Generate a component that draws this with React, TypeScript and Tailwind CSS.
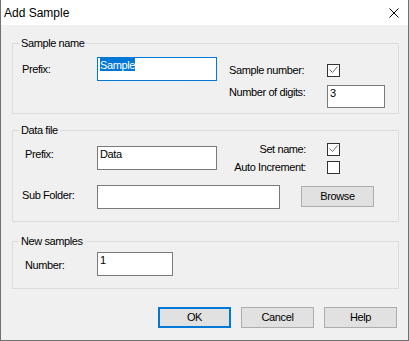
import type { ReactNode } from 'react';

const Checkbox = ({ checked }: { checked?: boolean }) => (
  <div className="w-[13px] h-[13px] shrink-0 border border-[#333333] bg-white">
    {checked && (
      <svg width="11" height="11" viewBox="0 0 11 11">
        <path d="M1.5 4.5 L4.5 7.5 L9.5 1.5" stroke="#6e6e6e" strokeWidth="1" fill="none" />
      </svg>
    )}
  </div>
);

const TextBox = ({ className, focused, children }: { className: string; focused?: boolean; children?: ReactNode }) => (
  <div
    className={`${className} shrink-0 bg-white border ${focused ? 'border-[#0078d7]' : 'border-[#7a7a7a]'} px-[2px] pt-[1px] leading-[13px]`}
  >
    {children}
  </div>
);

const Group = ({ title, className, children }: { title: string; className: string; children: ReactNode }) => (
  <div className={`w-[387px] border border-[#dcdcdc] ${className}`}>
    <div className="-mt-[7px] ml-[6px] px-[2px] w-fit h-[13px] leading-[13px] bg-[#f0f0f0]">{title}</div>
    {children}
  </div>
);

const Button = ({ label, primary }: { label: string; primary?: boolean }) => (
  <button
    className={`w-[73px] h-[21px] bg-[#e1e1e1] flex items-center justify-center leading-[13px] ${
      primary ? 'border-2 border-[#0078d7]' : 'border border-[#adadad]'
    }`}
  >
    {label}
  </button>
);

export default function App() {
  return (
    <div className="w-[409px] h-[341px] bg-[#f0f0f0] border-x border-b border-[#707070] flex flex-col text-black text-[11px] leading-[13px] tracking-[-0.4px] font-['Liberation_Sans',Arial,sans-serif]">
      {/* title bar */}
      <div className="h-[25px] shrink-0 bg-white flex items-center justify-between pl-[3px] pr-[9px]">
        <span className="text-[12px] tracking-normal mt-[1px]">Add Sample</span>
        <svg width="10" height="10" viewBox="0 0 10 10">
          <path d="M0.5 0.5 L9.5 9.5 M9.5 0.5 L0.5 9.5" stroke="#000" strokeWidth="1" />
        </svg>
      </div>

      <div className="pl-[11px] flex flex-col">
        <Group title="Sample name" className="mt-[18px] h-[71px]">
          <div className="flex items-start mt-[7px]">
            <div className="flex h-[24px]">
              <span className="ml-[9px] w-[75px] mt-[6px]">Prefix:</span>
              <TextBox className="w-[120px] h-[24px]" focused>
                <span className="bg-[#0078d7] text-white pt-[1px]">Sample</span>
              </TextBox>
            </div>
            <div className="ml-[12px] flex flex-col">
              <div className="mt-[7px] h-[13px] flex items-center">
                <span className="w-[98px] -mt-[1px]">Sample number:</span>
                <Checkbox checked />
              </div>
              <div className="mt-[8px] flex">
                <span className="w-[98px] mt-[1px]">Number of digits:</span>
                <TextBox className="w-[58px] h-[23px]">3</TextBox>
              </div>
            </div>
          </div>
        </Group>

        <Group title="Data file" className="mt-[16px] h-[92px]">
          <div className="flex items-start mt-[6px]">
            <div className="mt-[3px] flex h-[24px]">
              <span className="ml-[12px] w-[72px] mt-[2px]">Prefix:</span>
              <TextBox className="w-[120px] h-[24px]">Data</TextBox>
            </div>
            <div className="ml-[12px] flex flex-col">
              <div className="h-[13px] flex items-center">
                <span className="w-[77px] text-right">Set name:</span>
                <div className="ml-[21px]"><Checkbox checked /></div>
              </div>
              <div className="mt-[5px] h-[13px] flex items-center">
                <span className="w-[77px] text-right">Auto Increment:</span>
                <div className="ml-[21px]"><Checkbox /></div>
              </div>
            </div>
          </div>
          <div className="mt-[11px] flex items-start h-[24px]">
            <span className="ml-[9px] w-[75px] mt-[4px]">Sub Folder:</span>
            <TextBox className="w-[183px] h-[24px]" />
            <div className="ml-[21px] mt-[1px]"><Button label="Browse" /></div>
          </div>
        </Group>

        <Group title="New samples" className="mt-[19px] h-[48px]">
          <div className="mt-[4px] flex items-start">
            <span className="ml-[12px] w-[72px] mt-[7px]">Number:</span>
            <TextBox className="w-[76px] h-[24px]">1</TextBox>
          </div>
        </Group>

        <div className="mt-[18px] ml-[146px] flex gap-[10px]">
          <Button label="OK" primary />
          <Button label="Cancel" />
          <Button label="Help" />
        </div>
      </div>
    </div>
  );
}
